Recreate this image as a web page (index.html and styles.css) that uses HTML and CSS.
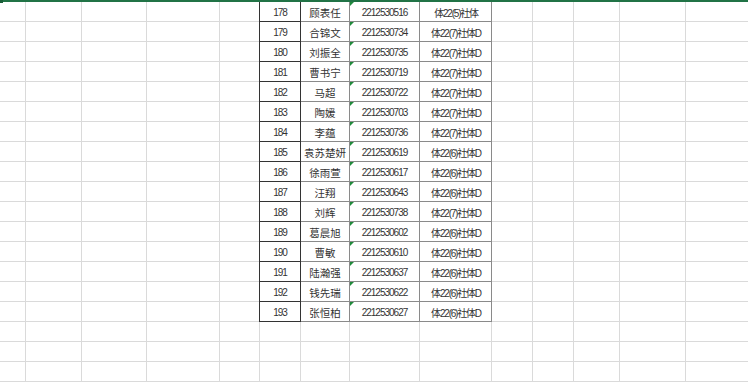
FILE: index.html
```html
<!DOCTYPE html>
<html lang="zh-CN">
<head>
<meta charset="utf-8">
<title>Sheet</title>
<link rel="stylesheet" href="styles.css">
</head>
<body>
<div class="topbar"></div>
<div class="sheet">
  <div class="col c-a"></div>
  <div class="col c-b"></div>
  <div class="col c-c"></div>
  <div class="col c-d"></div>
  <div class="col c-e"></div>
  <div class="mid">
    <div class="row"><div class="cell num">178</div><div class="cell name">顾表任</div><div class="cell id">2212530516</div><div class="cell cls">体22(5)社体</div></div>
    <div class="row"><div class="cell num">179</div><div class="cell name">合锦文</div><div class="cell id">2212530734</div><div class="cell cls">体22(7)社体D</div></div>
    <div class="row"><div class="cell num">180</div><div class="cell name">刘振全</div><div class="cell id">2212530735</div><div class="cell cls">体22(7)社体D</div></div>
    <div class="row"><div class="cell num">181</div><div class="cell name">曹书宁</div><div class="cell id">2212530719</div><div class="cell cls">体22(7)社体D</div></div>
    <div class="row"><div class="cell num">182</div><div class="cell name">马超</div><div class="cell id">2212530722</div><div class="cell cls">体22(7)社体D</div></div>
    <div class="row"><div class="cell num">183</div><div class="cell name">陶媛</div><div class="cell id">2212530703</div><div class="cell cls">体22(7)社体D</div></div>
    <div class="row"><div class="cell num">184</div><div class="cell name">李蕴</div><div class="cell id">2212530736</div><div class="cell cls">体22(7)社体D</div></div>
    <div class="row"><div class="cell num">185</div><div class="cell name">袁苏楚妍</div><div class="cell id">2212530619</div><div class="cell cls">体22(6)社体D</div></div>
    <div class="row"><div class="cell num">186</div><div class="cell name">徐雨萱</div><div class="cell id">2212530617</div><div class="cell cls">体22(6)社体D</div></div>
    <div class="row"><div class="cell num">187</div><div class="cell name">汪翔</div><div class="cell id">2212530643</div><div class="cell cls">体22(6)社体D</div></div>
    <div class="row"><div class="cell num">188</div><div class="cell name">刘辉</div><div class="cell id">2212530738</div><div class="cell cls">体22(7)社体D</div></div>
    <div class="row"><div class="cell num">189</div><div class="cell name">葛晨旭</div><div class="cell id">2212530602</div><div class="cell cls">体22(6)社体D</div></div>
    <div class="row"><div class="cell num">190</div><div class="cell name">曹敏</div><div class="cell id">2212530610</div><div class="cell cls">体22(6)社体D</div></div>
    <div class="row"><div class="cell num">191</div><div class="cell name">陆瀚强</div><div class="cell id">2212530637</div><div class="cell cls">体22(6)社体D</div></div>
    <div class="row"><div class="cell num">192</div><div class="cell name">钱先瑞</div><div class="cell id">2212530622</div><div class="cell cls">体22(6)社体D</div></div>
    <div class="row"><div class="cell num">193</div><div class="cell name">张恒柏</div><div class="cell id">2212530627</div><div class="cell cls">体22(6)社体D</div></div>
    <div class="row empty"><div class="cell"></div><div class="cell"></div><div class="cell"></div><div class="cell"></div></div>
    <div class="row empty"><div class="cell"></div><div class="cell"></div><div class="cell"></div><div class="cell"></div></div>
    <div class="row empty"><div class="cell"></div><div class="cell"></div><div class="cell"></div><div class="cell"></div></div>
  </div>
  <div class="col c-j"></div>
  <div class="col c-k"></div>
  <div class="col c-l"></div>
  <div class="col c-m"></div>
  <div class="col c-n"></div>
</div>
</body>
</html>
```

FILE: styles.css
```css
* { box-sizing: border-box; }
html, body { margin: 0; padding: 0; background: #fff; overflow: hidden; }
body { width: 748px; height: 382px; }

.topbar {
  height: 2px;
  background: #217346;
  position: relative;
}
.topbar::before {
  content: "";
  position: absolute;
  left: 0; top: 0;
  width: 3px; height: 3px;
  background: #1a5e38;
}

.sheet {
  display: flex;
  height: 380px;
  background: repeating-linear-gradient(to bottom, transparent 0 19px, #dadada 19px 20px);
}

.col { flex: none; height: 100%; border-right: 1px solid #dadada; }
.c-a { width: 26px; }
.c-b { width: 56px; }
.c-c { width: 65px; }
.c-d { width: 73px; }
.c-e { width: 39px; border-right: none; }
.c-j { width: 41px; }
.c-k { width: 41px; }
.c-l { width: 46px; }
.c-m { width: 66px; }
.c-n { width: 62px; border-right: none; }

.mid { flex: none; width: 233px; background: #fff; }

.row {
  display: grid;
  grid-template-columns: 42px 49px 70px 72px;
  height: 20px;
}
.cell {
  height: 20px;
  border-right: 1px solid #8a8a8a;
  border-bottom: 1px solid #8a8a8a;
  display: flex;
  align-items: center;
  justify-content: center;
  font-family: "Liberation Sans", "Noto Sans CJK SC", sans-serif;
  font-size: 10px;
  letter-spacing: -1px;
  color: #333;
  white-space: nowrap;
  padding-top: 1px;
}
.cell.name { font-size: 10.5px; letter-spacing: 0; }
.cell.cls { letter-spacing: -1.2px; padding-left: 1px; }
.cell.num {
  border-left: 1px solid #333;
  border-right-color: #333;
  border-bottom-color: #333;
}
.cell.id { position: relative; }
.cell.id::before {
  content: "";
  position: absolute;
  left: 0; top: 0;
  border-top: 4px solid #1f8a3b;
  border-right: 4px solid transparent;
}

.row.empty .cell {
  border-right-color: #dadada;
  border-bottom-color: #dadada;
}
.row.empty .cell:first-child { border-left: 1px solid #dadada; }
```
